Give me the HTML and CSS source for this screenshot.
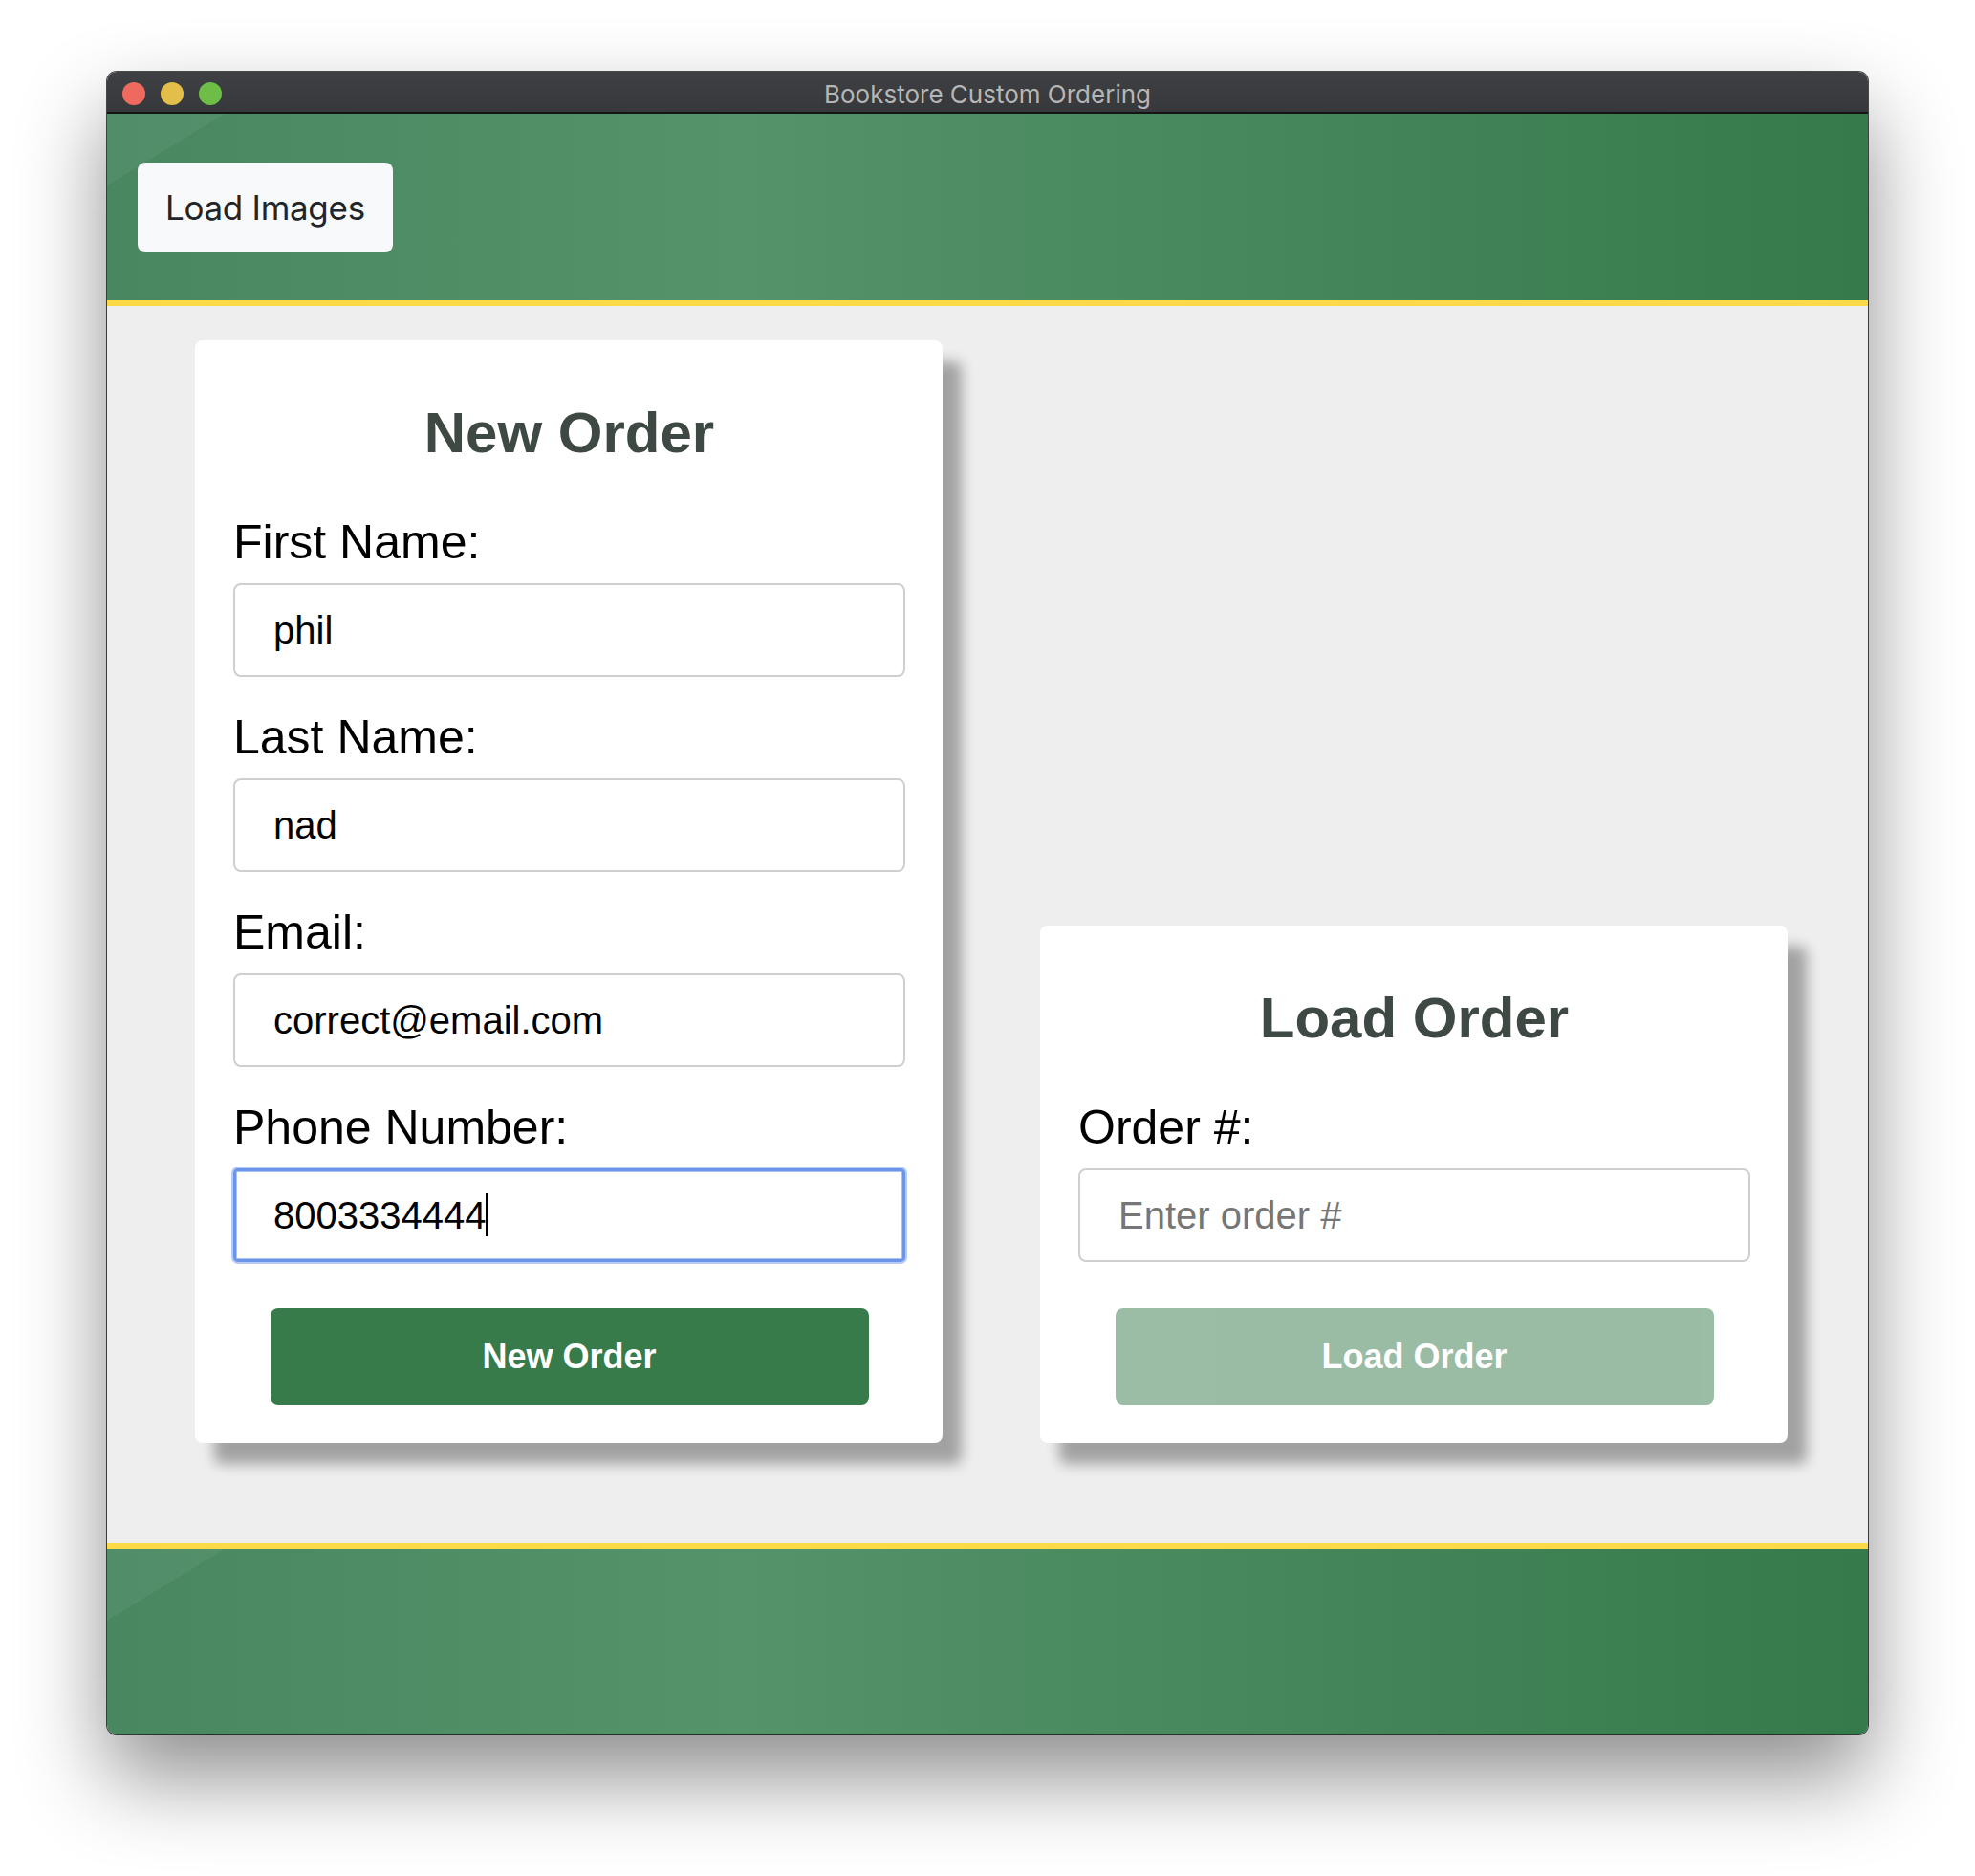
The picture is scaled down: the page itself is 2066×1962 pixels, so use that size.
FILE: index.html
```html
<!DOCTYPE html>
<html lang="en">
    <head>
        <meta charset="UTF-8" />
        <title>Bookstore Custom Ordering</title>
        <meta name="viewport" content="width=device-width, initial-scale=1.0" />
        <link rel="stylesheet" href="styles.css">
    </head>
    <body>
        <div class="window">
            <div class="titlebar">
                <div class="lights">
                    <span class="light red"></span>
                    <span class="light yellow"></span>
                    <span class="light green"></span>
                </div>
                <div class="title">Bookstore Custom Ordering</div>
                <div></div>
            </div>

            <header class="topbar">
                <button class="btn-light" id="load-images">Load Images</button>
            </header>

            <main class="content">
                <section class="card">
                    <h2>New Order</h2>
                    <label for="first-name">First Name:</label>
                    <input type="text" id="first-name" value="phil" />

                    <label for="last-name">Last Name:</label>
                    <input type="text" id="last-name" value="nad" />

                    <label for="email">Email:</label>
                    <input type="text" id="email" value="correct@email.com" />

                    <label for="phone">Phone Number:</label>
                    <div class="input-wrap">
                        <input type="text" id="phone" class="focused" value="8003334444" />
                        <span class="caret"></span>
                    </div>

                    <button class="btn-green" id="new-order">New Order</button>
                </section>

                <section class="card">
                    <h2>Load Order</h2>
                    <label for="order-number">Order #:</label>
                    <input type="text" id="order-number" placeholder="Enter order #" />

                    <button class="btn-green" id="load-order" disabled>Load Order</button>
                </section>
            </main>

            <footer class="bottombar"></footer>
        </div>
    </body>
</html>
```

FILE: styles.css
```css
* {
    margin: 0;
    padding: 0;
    box-sizing: border-box;
}

body {
    font-family: "Liberation Sans", Arial, sans-serif;
    background: #fff;
    color: #000;
    width: 2066px;
    height: 1962px;
    padding: 75px 0 0 112px;
    overflow: hidden;
}

.window {
    width: 1842px;
    border-radius: 10px;
    overflow: hidden;
    box-shadow: 0 0 0 1px rgba(0, 0, 0, 0.7), 0 44px 90px rgba(0, 0, 0, 0.45);
}

/* title bar */

.titlebar {
    height: 44px;
    padding-top: 4px;
    display: grid;
    grid-template-columns: 1fr auto 1fr;
    align-items: center;
    background: linear-gradient(#3f4043, #37383b);
    border-bottom: 2px solid #141414;
}

.lights {
    display: flex;
    gap: 16px;
    padding-left: 16px;
}

.light {
    width: 24px;
    height: 24px;
    border-radius: 50%;
}

.light.red {
    background: #ee6a5f;
}

.light.yellow {
    background: #e3be4a;
}

.light.green {
    background: #6dbd47;
}

.title {
    font-family: Inter, "Noto Sans", sans-serif;
    font-size: 26px;
    color: #b6b6b6;
}

/* green bars */

.topbar,
.bottombar {
    background:
        linear-gradient(148.6deg, rgba(255, 255, 255, 0.05) 64px, transparent 64px),
        linear-gradient(to right, #488760 0%, #55936a 36%, #46875b 66%, #357a4a 100%);
}

.topbar {
    padding: 51px 32px 50px;
    border-bottom: 6px solid #fbd947;
}

.bottombar {
    height: 200px;
    border-top: 6px solid #fbd947;
}

.btn-light {
    height: 94px;
    padding: 0 29px;
    background: #f8f9fa;
    color: #212529;
    border: none;
    border-radius: 8px;
    font-family: Inter, "Noto Sans", sans-serif;
    font-size: 35px;
    letter-spacing: -0.3px;
    cursor: pointer;
}

/* cards */

.content {
    background: #eee;
    display: flex;
    align-items: flex-end;
    gap: 102px;
    padding: 36px 84px 105px 92px;
}

.card {
    width: 782px;
    background: #fff;
    border-radius: 8px;
    padding: 40px 39px 40px 40px;
    box-shadow: 20px 22px 14px rgba(0, 0, 0, 0.32);
}

.card h2 {
    margin: 22px 0 50px;
    font-size: 60px;
    line-height: 70px;
    font-weight: bold;
    text-align: center;
    color: #3e4943;
}

.card label {
    display: block;
    font-size: 50px;
    line-height: 58px;
    margin-bottom: 14px;
}

.card input {
    display: block;
    width: 100%;
    height: 98px;
    margin-bottom: 34px;
    padding: 0 40px;
    border: 2px solid #cfcfcf;
    border-radius: 8px;
    font-family: "Liberation Sans", Arial, sans-serif;
    font-size: 40px;
    color: #000;
    outline: none;
}

.card input::placeholder {
    color: #767676;
}

.card input.focused {
    border: 3px solid #6c95e8;
    padding-left: 39px;
    border-radius: 5px;
    box-shadow: 0 0 0 2px rgba(120, 158, 236, 0.55), inset 0 0 0 1px #aac2f3;
}

.input-wrap {
    position: relative;
}

.caret {
    position: absolute;
    left: 264px;
    top: 26px;
    width: 2px;
    height: 45px;
    background: #000;
}

.btn-green {
    display: block;
    width: 626px;
    height: 101px;
    margin: 48px auto 0;
    background: #377b4b;
    color: #fff;
    border: none;
    border-radius: 8px;
    font-family: "Liberation Sans", Arial, sans-serif;
    font-size: 36px;
    font-weight: bold;
    cursor: pointer;
}

.btn-green:disabled {
    opacity: 0.5;
    cursor: default;
}
```
